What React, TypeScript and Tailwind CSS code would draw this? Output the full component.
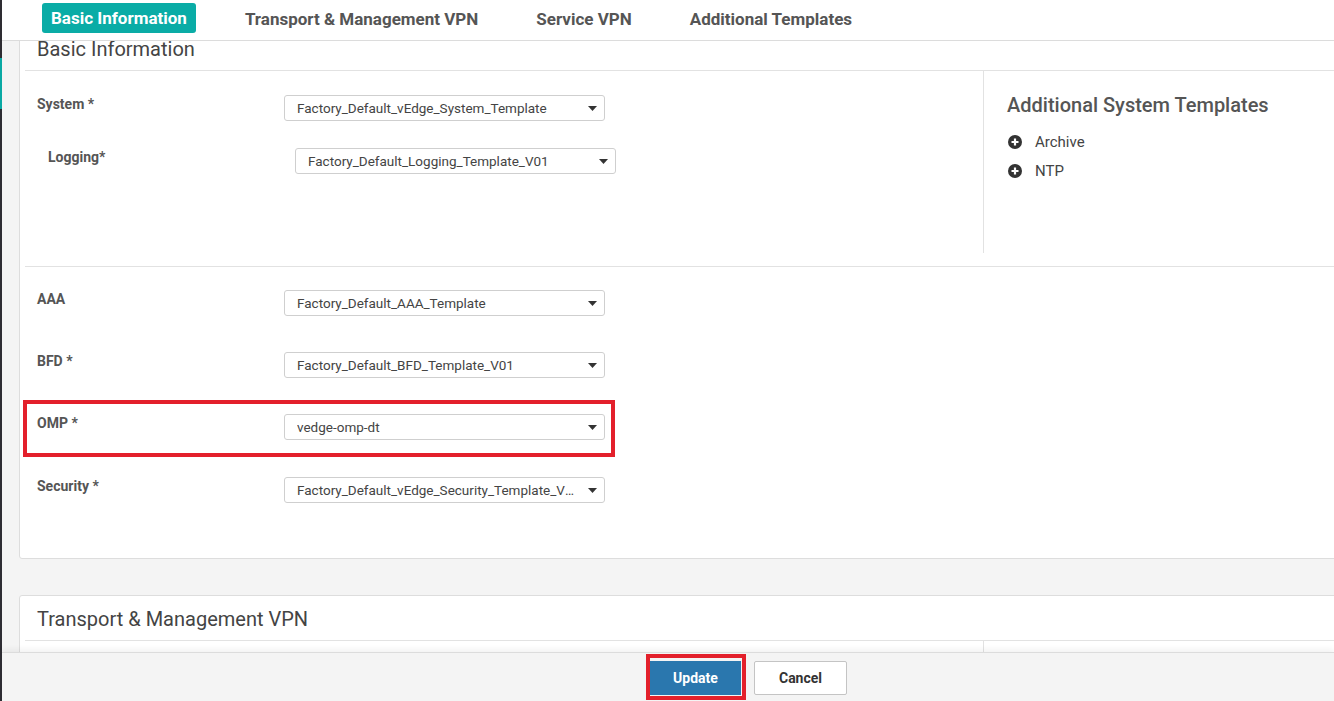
import React from 'react';

type RowProps = { label: string; value: string; indent?: boolean; children?: React.ReactNode };

const Caret: React.FC = () => (
  <svg width="9" height="5" viewBox="0 0 9 5" className="shrink-0">
    <path d="M0 0h9L4.5 5z" fill="#333" />
  </svg>
);

const PlusCircle: React.FC = () => (
  <svg width="14" height="14" viewBox="0 0 14 14" className="shrink-0">
    <circle cx="7" cy="7" r="7" fill="#333" />
    <path d="M7 3.5v7M3.5 7h7" stroke="#fff" strokeWidth="2.2" />
  </svg>
);

const Select: React.FC<{ value: string }> = ({ value }) => (
  <div className="flex h-[26px] w-[321px] items-center rounded-[3px] border border-[#cfcfcf] bg-white pl-[12px] pr-[7px]">
    <span className="min-w-0 flex-1 truncate pr-[12px] text-[13.5px] leading-[24px] text-[#444]">{value}</span>
    <Caret />
  </div>
);

const Row: React.FC<RowProps> = ({ label, value, indent, children }) => (
  <div className={indent ? 'relative flex items-start pl-[11px]' : 'relative flex items-start'}>
    {children}
    <div className="w-[247px] shrink-0 pt-[2px] text-[14px] font-bold leading-[20px] text-[#555]">{label}</div>
    <div className="mt-[3px]">
      <Select value={value} />
    </div>
  </div>
);

const tabs = ['Transport & Management VPN', 'Service VPN', 'Additional Templates'];

export default function App() {
  return (
    <div className="flex h-[701px] w-[1334px] overflow-hidden bg-[#f4f4f4] font-['Roboto','Liberation_Sans',sans-serif]">
      {/* side rail */}
      <div className="w-[2px] shrink-0 bg-[#2e2d33]">
        <div className="mt-[58px] h-[51px] bg-[#0aa9a4]" />
      </div>

      <div className="flex min-w-0 flex-1 flex-col">
        <nav className="flex h-[41px] shrink-0 items-start border-b border-[#dcdcdc] bg-white pl-[40px] pt-[3px]">
          <div className="h-[30px] rounded-[3px] bg-[#0aaca6] px-[9px] pt-px text-[17px] font-bold leading-[29px] text-white">
            Basic Information
          </div>
          {tabs.map((t, i) => (
            <div
              key={t}
              className={
                i === 0
                  ? 'ml-[49px] pt-px text-[17px] font-bold leading-[31px] text-[#555]'
                  : 'ml-[58px] pt-px text-[17px] font-bold leading-[31px] text-[#555]'
              }
            >
              {t}
            </div>
          ))}
        </nav>

        <main className="relative min-h-0 flex-1 overflow-hidden">
          <div className="-mt-[17px] w-[1340px] pl-[17px]">
            {/* Basic Information card */}
            <section className="rounded-[3px] border border-[#dddddd] bg-white">
              <h2 className="px-[17px] pb-[9px] pt-[12px] text-[20px] leading-[24px] text-[#444]">Basic Information</h2>
              <div className="ml-[5px] h-px bg-[#e2e2e2]" />

              <div className="flex">
                <div className="h-[182px] w-[964px] shrink-0 border-r border-[#e2e2e2] pl-[17px] pt-[21px]">
                  <Row label="System *" value="Factory_Default_vEdge_System_Template" />
                  <div className="mt-[24px]">
                    <Row label="Logging*" value="Factory_Default_Logging_Template_V01" indent />
                  </div>
                </div>
                <div className="pl-[23px] pt-[22px]">
                  <h3 className="text-[20px] font-medium leading-[24px] text-[#555]">Additional System Templates</h3>
                  <div className="mt-[15px] flex flex-col gap-[9px]">
                    {['Archive', 'NTP'].map((x) => (
                      <div key={x} className="flex h-[20px] items-center gap-[13px] pl-px text-[15px] text-[#444]">
                        <PlusCircle />
                        <span>{x}</span>
                      </div>
                    ))}
                  </div>
                </div>
              </div>
              <div className="h-[13px]" />
              <div className="ml-[5px] h-px bg-[#e2e2e2]" />

              <div className="flex flex-col pb-[55px] pl-[17px] pt-[20px]">
                <Row label="AAA" value="Factory_Default_AAA_Template" />
                <div className="mt-[33px]">
                  <Row label="BFD *" value="Factory_Default_BFD_Template_V01" />
                </div>
                <div className="mt-[33px]">
                  <Row label="OMP *" value="vedge-omp-dt">
                    <div className="pointer-events-none absolute left-[-14px] top-[-11px] h-[57px] w-[592px] border-4 border-[#e3202b]" />
                  </Row>
                </div>
                <div className="mt-[34px]">
                  <Row label="Security *" value="Factory_Default_vEdge_Security_Template_V01" />
                </div>
              </div>
            </section>

            {/* Transport & Management VPN card */}
            <section className="mt-[36px] rounded-[3px] border border-[#dddddd] bg-white">
              <h2 className="px-[17px] pb-[9px] pt-[11px] text-[20px] leading-[24px] text-[#444]">
                Transport &amp; Management VPN
              </h2>
              <div className="ml-[5px] h-px bg-[#e2e2e2]" />
              <div className="flex">
                <div className="h-[100px] w-[964px] shrink-0 border-r border-[#e2e2e2]" />
              </div>
            </section>
          </div>
        </main>

        <footer className="relative z-10 flex h-[49px] shrink-0 items-start border-t border-[#dcdcdc] bg-[#f4f4f4] pl-[648px] pt-[8px] shadow-[0_-3px_6px_rgba(0,0,0,0.05)]">
          <button className="relative h-[34px] w-[91px] bg-[#2a77ae] text-[14px] font-bold text-white">
            Update
            <span className="pointer-events-none absolute left-[-4px] top-[-7px] h-[46px] w-[100px] border-4 border-[#e3202b]" />
          </button>
          <button className="ml-[13px] h-[34px] w-[93px] rounded-[2px] border border-[#c4c4c4] bg-white text-[14px] font-bold text-[#333]">
            Cancel
          </button>
        </footer>
      </div>
    </div>
  );
}
